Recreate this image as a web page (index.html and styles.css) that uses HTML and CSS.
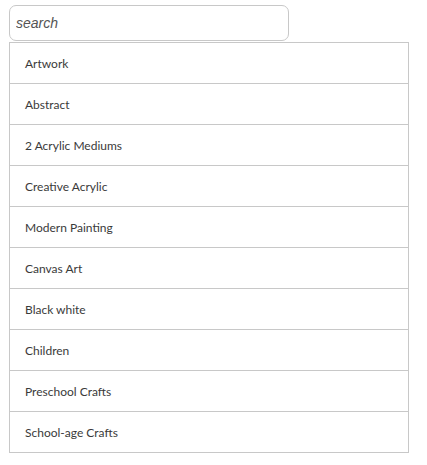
FILE: index.html
```html
<!DOCTYPE html>
<html>
<head>
<meta charset="utf-8">
<link rel="stylesheet" href="styles.css">
</head>
<body>
<div class="wrap">
  <input class="search" type="text" placeholder="search">
  <ul class="list">
    <li>Artwork</li>
    <li>Abstract</li>
    <li>2 Acrylic Mediums</li>
    <li>Creative Acrylic</li>
    <li>Modern Painting</li>
    <li>Canvas Art</li>
    <li>Black white</li>
    <li>Children</li>
    <li>Preschool Crafts</li>
    <li>School-age Crafts</li>
  </ul>
</div>
</body>
</html>
```
FILE: styles.css
```css
html, body {
  margin: 0;
  padding: 0;
  background: #fff;
}
.wrap {
  padding: 5px 0 0 9px;
}
.search {
  display: block;
  box-sizing: border-box;
  width: 280px;
  height: 36px;
  margin: 0 0 1px 0;
  padding: 0 6px;
  border: 1px solid #c8c8c8;
  border-radius: 7px;
  font-family: "Liberation Sans", Arial, sans-serif;
  font-size: 14px;
  font-style: italic;
  color: #333;
  outline: none;
}
.search::placeholder {
  color: #555;
  opacity: 1;
}
.list {
  list-style: none;
  margin: 0;
  padding: 0;
  width: 400px;
  box-sizing: border-box;
  border: 1px solid #c8c8c8;
  border-bottom: none;
}
.list li {
  height: 40px;
  line-height: 41px;
  border-bottom: 1px solid #c8c8c8;
  padding-left: 15px;
  font-family: Lato, "Open Sans", sans-serif;
  font-size: 12px;
  color: #3a3a3a;
}
```
